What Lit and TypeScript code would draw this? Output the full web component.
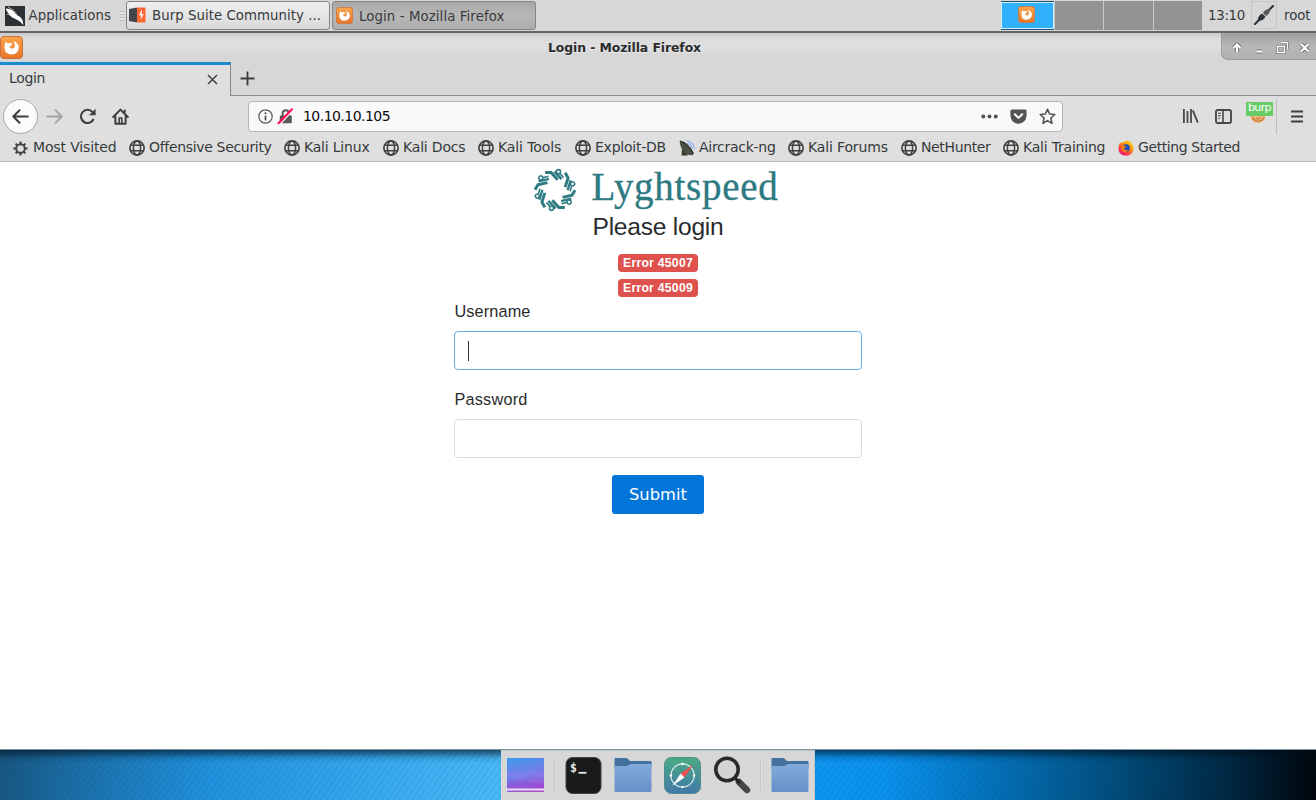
import { LitElement, html, css, svg } from "lit";
import { customElement, property } from "lit/decorators.js";

/* Text run whose tracking is adjusted so that it spans a given width. */
@customElement("fit-text")
class FitText extends LitElement {
  @property({ type: Number }) w = 0;
  static styles = css`
    :host { display: inline-block; white-space: pre; }
    span { display: inline-block; }
  `;
  render() {
    return html`<span><slot></slot></span>`;
  }
  firstUpdated() {
    const span = this.renderRoot.querySelector("span") as HTMLElement;
    const n = (this.textContent || "").length;
    const natural = span.getBoundingClientRect().width;
    if (n > 1 && this.w) {
      span.style.letterSpacing = `${(this.w - natural) / n}px`;
    }
  }
}

const globe = html`<svg width="16" height="16" viewBox="0 0 16 16" fill="none" stroke="#3f423f" stroke-width="1.5">
  <circle cx="8" cy="8" r="7.1" stroke-width="1.7" />
  <ellipse cx="8" cy="8" rx="3.6" ry="7" />
  <path d="M1.7 5.3H14.3M1.7 10.7H14.3" />
</svg>`;

const gear = html`<svg width="15" height="16" viewBox="0 0 15 16" fill="none" stroke="#3f423f">
  <circle cx="7.5" cy="8.5" r="4.3" stroke-width="1.9" />
  <path stroke-width="2" d="M7.5 4V1.4M7.5 13V15.6M3 8.5H.4M12 8.5H14.6M4.3 5.3 2.6 3.6M10.7 5.3l1.7-1.7M4.3 11.7l-1.7 1.7M10.7 11.7l1.7 1.7" />
</svg>`;

const dish = html`<svg width="16" height="16" viewBox="0 0 16 16">
  <path d="M8 .8Q15 2 15.4 9M8 3.3Q12.6 4.4 13.3 9" fill="none" stroke="#8fb6ee" stroke-width="1.3" />
  <path d="M3 9 2.5 15.6H9L7 11z" fill="#3b382c" />
  <path d="M.6 .5Q10 2 15 13.4 13 17 7.5 13.8 1 9.5 .6 .5z" fill="#4c5146" />
  <path d="M1.2 1.2Q9 4 14.4 13.5" fill="none" stroke="#25272a" stroke-width="1" />
</svg>`;

const firefoxBall = html`<svg width="16" height="16" viewBox="0 0 16 16">
  <defs><linearGradient id="fx" x1=".9" y1="0" x2=".2" y2="1">
    <stop offset="0" stop-color="#ffe226" /><stop offset=".4" stop-color="#ff980e" /><stop offset=".75" stop-color="#ff3648" /><stop offset="1" stop-color="#e31587" />
  </linearGradient></defs>
  <path d="M2 2.4 3.3 3.3Q5 1.4 7.4 1.6L9 .3Q15.6 2.5 15.6 8.5 15 15.5 8 15.7 1 15.4.4 9 .4 5 2 2.4z" fill="url(#fx)" />
  <circle cx="8.2" cy="8" r="3.7" fill="#1b4fb0" />
  <path d="M3.4 5.2 8 6.2 6.8 8.3 5.6 8.5Q7 11 10.4 9.8 9 12.8 5.8 12 2.4 10.2 3.4 5.2z" fill="#ff7a18" />
</svg>`;

const orangeFox = (s: number) => html`<svg width=${s} height=${s} viewBox="0 0 22 22">
  <defs><linearGradient id="of" x1="0" y1="0" x2="0" y2="1"><stop offset="0" stop-color="#fba64c" /><stop offset="1" stop-color="#ea7428" /></linearGradient></defs>
  <rect x=".5" y=".5" width="21" height="21" rx="3.6" fill="url(#of)" stroke="#c9713a" />
  <path d="M5.4 5.2 7.2 7.2Q9 6.2 11.2 6.9L12 8.6 9.8 9.4Q9 10 9.5 11 11 12.8 13 11.8 14.600 10.600 14.200 8.500L12.800 4.800Q18 7 18 11.3 17.3 17.4 11.2 17.8 4.6 17.3 4.3 11.5 4.2 8 5.4 5.2z" fill="#fff" />
</svg>`;

const folder = (id: string) => html`<svg width="38" height="36" viewBox="0 0 38 36">
  <defs><linearGradient id=${id} x1="0" y1="0" x2="0" y2="1"><stop offset="0" stop-color="#83acdd" /><stop offset="1" stop-color="#668fc7" /></linearGradient></defs>
  <path d="M.5 2Q.5 1 1.5 1H12Q13.5 1 14.5 2.5L16 4H36.5Q37.5 4 37.5 5V12H.5z" fill="#44719d" />
  <path d="M.5 9H12Q14 9 15 8T18 7H37.5V33.5Q37.5 35 36 35H2Q.5 35 .5 33.5z" fill=${`url(#${id})`} />
</svg>`;

/* One arm of the circuit wheel, repeated six times around the centre. */
const arm = svg`
  <path d="M-9.6-17H-3.9L2.6-10" stroke-width="2.900" />
  <path d="M-.6-18 6.4-10.600" stroke-width="2.300" />
  <path d="M5-15.800 8.400-12.200" stroke-width="1.600" />
  <circle cx="3.4" cy="-17.9" r="2" stroke-width="1.5" fill="#fff" />
`;

const bookmarks: [string, number, unknown][] = [
  ["Most Visited", 83.5, gear],
  ["Offensive Security", 122.3, globe],
  ["Kali Linux", 65.5, globe],
  ["Kali Docs", 62.5, globe],
  ["Kali Tools", 63.3, globe],
  ["Exploit-DB", 71, globe],
  ["Aircrack-ng", 76.5, dish],
  ["Kali Forums", 79.8, globe],
  ["NetHunter", 69.5, globe],
  ["Kali Training", 82.3, globe],
  ["Getting Started", 102, firefoxBall],
];

@customElement("app-root")
class AppRoot extends LitElement {
  static styles = css`
    * { box-sizing: border-box; }
    :host {
      display: flex; flex-direction: column; width: 1316px; height: 800px; overflow: hidden;
      font-family: "DejaVu Sans", sans-serif; color: #363a3b; background: #fff;
    }
    svg { display: block; flex: none; }

    .panel { height: 33px; flex: none; display: flex; align-items: flex-start; background: #d7d7d7; border-bottom: 2px solid #656565; font-size: 13.3px; }
    .apps { width: 126px; height: 31px; display: flex; align-items: center; padding-left: 5px; gap: 3.5px; }
    .grip { width: 4px; height: 10px; margin-left: 5px; background: repeating-linear-gradient(#bdbdbd 0 1px, #e2e2e2 1px 3px); }
    .task { width: 204px; height: 29px; margin: 1px 2px 0 0; border: 1px solid #858585; border-radius: 3px; display: flex; align-items: center; padding: 0 0 1px 2px; gap: 6px; background: linear-gradient(#f1f0f1, #e4e3e4 55%, #d9d9d9); }
    .task.on { background: linear-gradient(#a8a8a8, #b8b7b8 50%, #adadad); gap: 6px; padding-left: 3px; }
    .task.on fit-text { margin-top: 2px; }
    .spacer { flex: 1; }
    .pager { display: flex; gap: 1px; height: 29px; margin-top: 1px; background: #c9c9c9; width: 201px; }
    .desk { flex: 1; background: #929492; }
    .desk.cur { background: #31b1fb; border: 1px solid #d5efff; box-shadow: 0 -1px #195378, 0 1px #195378; height: 27px; margin-top: 1px; display: flex; justify-content: center; align-items: center; padding: 0 2px 2px 0; }
    .clock { width: 49px; height: 30px; display: flex; align-items: center; padding-left: 6px; }
    .plug { width: 26px; height: 28px; margin-top: 1px; border: 1px solid #c6c6c6; display: grid; place-items: center; }
    .user { width: 39px; height: 30px; display: flex; align-items: center; padding-left: 7px; }

    .title { height: 29px; flex: none; display: flex; align-items: flex-start; background: linear-gradient(#c9c9c9, #dddcdd 6px, #dfdee0 15px, #d7d7d7 21px); }
    .title .ico { width: 24px; padding-top: 3px; }
    .title .name { flex: 1; display: flex; justify-content: center; height: 29px; align-items: center; font-weight: 700; font-size: 12.4px; color: #2b2c2c; padding-left: 4px; text-shadow: 0 1px #ececec; }
    .winbtns { width: 95px; height: 27px; display: flex; align-items: center; justify-content: space-between; border: 1px solid #9c9c9c; border-width: 0 0 1px 1px; border-radius: 0 0 0 7px; background: linear-gradient(#9f9f9f, #b9b8b9 14px, #b0b0b0); padding: 3px 3px 0 7px; }

    .tabs { height: 34px; flex: none; display: flex; background: #d7d7d7; box-shadow: inset 0 -1px #8d8e8c; }
    .tab { width: 231px; height: 34px; background: #dfdfdf; border-top: 3px solid #198ccf; border-right: 1px solid #858783; display: flex; align-items: center; justify-content: space-between; padding: 0 12px 5px 9px; font-size: 14px; }
    .tab svg { margin-top: 2px; }
    .plus { width: 33px; display: grid; place-items: center; padding-bottom: 2px; }

    .nav { height: 39px; flex: none; display: flex; align-items: center; background: #dfdfdf; padding: 1px 0 0 3px; }
    .back { width: 35px; height: 35px; border-radius: 50%; border: 1px solid #a7a8a6; background: #fbfafc; display: grid; place-items: center; }
    .nav .fwd { margin-left: 8px; }
    .nav .rel { margin-left: 16px; }
    .nav .home { margin-left: 16px; }
    .url { width: 815px; height: 31px; margin-left: 119px; background: #f9f9f9; border: 1px solid #b4b3b4; border-radius: 4px; display: flex; align-items: center; padding: 0 6px 0 9px; font-size: 14px; color: #0c0c0d; }
    .url .lock { margin-left: 4px; }
    .url .addr { margin-left: 9px; flex: 1; }
    .url .poc { margin: 0 12px 0 12px; }
    .lib { margin-left: 119px; }
    .side { margin-left: 16px; }
    .ext { position: relative; width: 30px; height: 38px; margin-left: 14px; padding: 11px 0 0 4px; }
    .burp { position: absolute; left: 0; top: 5px; width: 27px; height: 14px; background: #66cc66; color: #fff; font-size: 11.2px; line-height: 12px; text-align: center; }
    .menu { height: 35px; border-left: 1px solid #bdbdbd; padding: 10px 0 0 14px; }

    .marks { height: 27px; flex: none; display: grid; grid-template-columns: 116px 155px 99px 95px 97px 104px 109px 113px 102px 115px 140px; align-items: center; padding: 0 0 3px 13px; background: #dfdfdf; border-bottom: 1px solid #bcbbbc; font-size: 14px; }
    .mark { display: flex; align-items: center; gap: 4px; }
    .mark:first-child { gap: 5px; }
    .mark svg { margin-top: 2px; }

    .page { flex: 1; background: #fff; display: flex; flex-direction: column; align-items: center; font-family: "Liberation Sans", sans-serif; color: #292b2c; }
    .brand { display: flex; align-items: center; height: 50px; margin-top: 3px; gap: 15px; padding-right: 5px; color: #2d7a83; font-family: "Liberation Serif", serif; font-size: 39px; line-height: 46px; }
    .brand fit-text { margin-top: -6px; -webkit-text-stroke: .35px #2d7a83; }
    .brand svg { margin-top: -1px; }
    h1 { font-size: 24.6px; font-weight: 400; line-height: 30px; margin: -3px 0 12px; }
    .badge { background: #de514c; color: #fff; font-weight: 700; font-size: 12.2px; border-radius: 4px; width: 80px; height: 18px; line-height: 18px; text-align: center; margin-bottom: 7px; }
    form { width: 408px; margin-top: -5px; display: flex; flex-direction: column; font-size: 16.3px; }
    label { line-height: 24px; margin: 0 0 8px .5px; }
    .field { height: 39px; border: 1px solid #dadbdc; border-radius: 4px; background: #fff; margin-bottom: 17px; padding: 9px 13px; }
    .field.focus { border-color: #66afe9; }
    .caret { width: 1px; height: 20px; background: #333; }
    .submit { align-self: center; width: 92px; height: 39px; border: 0; padding: 0; border-radius: 3px; background: #0275d8; color: #fff; font: 16.3px "DejaVu Sans", sans-serif; }

    .desktop { height: 51px; flex: none; display: flex; justify-content: center; border-top: 1px solid #7a95a5;
      background:
        linear-gradient(rgba(0,10,20,.62), rgba(0,10,20,.12) 8px, transparent 13px),
        repeating-linear-gradient(125deg, rgba(0,30,60,.06) 0 2px, transparent 2px 5px),
        linear-gradient(97deg, #175680 0, #1a6ca3 70px, #2092de 215px, #33a5ec 350px, #48b8f6 500px, #0d96f0 815px, #0a92ee 880px, #0474be 980px, #025081 1100px, #002c49 1210px, #00060b 1310px); }
    .dock { width: 314px; height: 50px; background: #d7d7d7; border: 1px solid #c4c4c4; border-width: 1px 1px 0 0; display: flex; align-items: center; padding: 0 0 1px 5px; }
    .dock .sep { width: 1px; height: 32px; background: #c8c8c8; box-shadow: 1px 0 #e1e1e1; margin: 0 10px 0 9px; }
    .dock .f1 { margin-left: 12px; }
    .dock .nv { margin-left: 12px; }
    .dock .mg { margin-left: 12px; }
  `;

  render() {
    return html`
      <div class="panel">
        <div class="apps">
          <svg width="20" height="20" viewBox="0 0 20 20"><rect width="20" height="20" fill="#2b3134" /><path d="M1 2.5Q8 3 11 8.5 15 10 17.5 14L18.5 19Q14 14 9.500 12.500 5 11 1 3.500z" fill="#fff" /><path d="M3 1Q9 3 12 9M2 8Q7 9 9 12" stroke="#fff" stroke-width=".6" fill="none" /></svg>
          <fit-text w="82.5">Applications</fit-text>
          <span class="grip"></span>
        </div>
        <div class="task">
          <svg width="17" height="16" viewBox="0 0 17 16"><path d="M0 2 8 .5V15.5L0 14z" fill="#45484b" /><path d="M8 .5H15.5Q16.5.5 16.5 1.5V14.5Q16.5 15.5 15.5 15.5H8z" fill="#ff6633" /><path d="M13 2 10 8.3H12.2L11.4 13 14.7 7H12.6z" fill="#fff" /></svg>
          <fit-text w="169">Burp Suite Community ...</fit-text>
        </div>
        <div class="task on">${orangeFox(17)}<fit-text w="145.5">Login - Mozilla Firefox</fit-text></div>
        <span class="spacer"></span>
        <div class="pager"><div class="desk cur">${orangeFox(17)}</div><div class="desk"></div><div class="desk"></div><div class="desk"></div></div>
        <div class="clock"><fit-text w="37">13:10</fit-text></div>
        <div class="plug"><svg width="20" height="20" viewBox="0 0 20 20"><path d="M.8 19.2 6 14M14 6 19.2.8" stroke="#30353a" stroke-width="2.2" stroke-linecap="round" /><path d="M3.6 16Q3.600 10.500 8.200 8.500L11.500 11.800Q9.500 16 3.600 16z" fill="#30353a" /><path d="M9 8Q11 3.800 16 4 16.200 9 12 11z" fill="#585c5d" /></svg></div>
        <div class="user"><fit-text w="26.5">root</fit-text></div>
      </div>

      <div class="title">
        <div class="ico">${orangeFox(23)}</div>
        <div class="name"><fit-text w="153">Login - Mozilla Firefox</fit-text></div>
        <div class="winbtns">
          <svg width="85" height="16" viewBox="0 0 85 16" fill="none">
            <g stroke="#787878" stroke-width="4" stroke-linejoin="round"><path d="M8 12.500V5M4.500 8 8 4.500 11.500 8M27.500 11.500H33.500M72 4 79.500 11.500M79.500 4 72 11.500" /><path d="M48.500 6.500H55.500V12.500H48.500zM52 2.500H58.500V9" stroke-width="3" /></g>
            <g stroke="#fff" stroke-width="2"><path d="M8 12.500V5M4.500 8 8 4.500 11.500 8M27.500 11.500H33.500M72 4 79.500 11.500M79.500 4 72 11.500" /><path d="M48.500 6.500H55.500V12.500H48.500zM52 2.500H58.500V9" stroke-width="1.3" /></g>
          </svg>
        </div>
      </div>

      <div class="tabs">
        <div class="tab"><fit-text w="36">Login</fit-text><svg width="11" height="11" viewBox="0 0 11 11"><path d="M1 1 10 10M10 1 1 10" stroke="#3f4240" stroke-width="1.5" /></svg></div>
        <div class="plus"><svg width="15" height="15" viewBox="0 0 15 15"><path d="M7.500.5V14.500M.5 7.500H14.500" stroke="#3a3d3b" stroke-width="1.8" /></svg></div>
      </div>

      <div class="nav">
        <div class="back"><svg width="17" height="15" viewBox="0 0 17 15" fill="none" stroke="#3d403e" stroke-width="2" stroke-linecap="round" stroke-linejoin="round"><path d="M7.500 1.200 1.300 7.500 7.500 13.800M1.500 7.500H15.800" /></svg></div>
        <svg class="fwd" width="17" height="15" viewBox="0 0 17 15" fill="none" stroke="#a2a3a2" stroke-width="1.9" stroke-linecap="round" stroke-linejoin="round"><path d="M9.500 1.200 15.700 7.500 9.500 13.800M15.500 7.500H1.200" /></svg>
        <svg class="rel" width="17" height="17" viewBox="0 0 17 17" fill="none"><path d="M13.600 4.200A6.600 6.600 0 1 0 14.600 11" stroke="#3d403e" stroke-width="2.1" /><path d="M16.600.8V7.200H10z" fill="#3d403e" /></svg>
        <svg class="home" width="17" height="17" viewBox="0 0 17 17" fill="none" stroke="#3d403e" stroke-width="2" stroke-linejoin="round" stroke-linecap="round"><path d="M1.200 9 8.500 1.600 15.800 9M3.400 8.600V15.800H13.600V8.600M12.800 2.400V4" /><path d="M7.200 15.500V10H9.800V15.500" stroke-width="1.6" /></svg>
        <div class="url">
          <svg width="15" height="15" viewBox="0 0 15 15"><circle cx="7.5" cy="7.5" r="6.7" fill="none" stroke="#59595a" stroke-width="1.2" /><path d="M7.500 6.600V11.400" stroke="#59595a" stroke-width="1.8" /><circle cx="7.5" cy="4.3" r="1.1" fill="#59595a" /></svg>
          <svg class="lock" width="17" height="17" viewBox="0 0 17 17"><path d="M5.600 8V5.200Q5.800 2.200 8.800 2.200T12 5.200V8" fill="none" stroke="#59595a" stroke-width="2" /><rect x="2.8" y="7.5" width="12" height="7.8" rx="1.2" fill="#59595a" /><path d="M3 16 16 2.200" stroke="#f9f9f9" stroke-width="1.6" /><path d="M1.500 15.200 15 1.200" stroke="#ff0b4e" stroke-width="2" stroke-linecap="round" /></svg>
          <span class="addr"><fit-text w="87">10.10.10.105</fit-text></span>
          <svg width="17" height="5" viewBox="0 0 17 5" fill="#515355"><circle cx="2.3" cy="2.5" r="2" /><circle cx="8.5" cy="2.5" r="2" /><circle cx="14.7" cy="2.5" r="2" /></svg>
          <svg class="poc" width="17" height="15" viewBox="0 0 17 15"><path d="M1.800.5H15.200Q16.600.5 16.600 2V6.500Q16 14.300 8.500 14.800 1 14.300.4 6.500V2Q.4.5 1.800.5z" fill="#515355" /><path d="M4.800 5.300 8.500 8.900 12.200 5.300" fill="none" stroke="#fff" stroke-width="2" stroke-linecap="round" stroke-linejoin="round" /></svg>
          <svg width="17" height="17" viewBox="0 0 17 17"><path d="M8.500 1.300 10.600 6 15.800 6.500 11.900 10 13 15.300 8.500 12.600 4 15.300 5.100 10 1.200 6.500 6.400 6z" fill="none" stroke="#515355" stroke-width="1.6" stroke-linejoin="round" /></svg>
        </div>
        <svg class="lib" width="17" height="16" viewBox="0 0 17 16" fill="none" stroke="#464947" stroke-width="1.8"><path d="M1.900 1V15M5.500 3V15M9 1V15M10.800 2.400 15.800 14.600" /></svg>
        <svg class="side" width="17" height="15" viewBox="0 0 17 15" fill="none" stroke="#464947"><rect x="1" y="1" width="15" height="13" rx="1.8" stroke-width="1.9" /><path d="M8 1V14" stroke-width="1.6" /><path d="M3 4.200H6M3 6.700H6M3 9.200H5" stroke-width="1.1" /></svg>
        <div class="ext">
          <svg width="17" height="16" viewBox="0 0 17 16"><ellipse cx="8" cy="8.2" rx="7.5" ry="6.7" fill="#edb878" /><path d="M2.500 9Q4 13 8 13.200T14 9.500M6 10Q8 12 10.500 9.500" fill="none" stroke="#c8793a" stroke-width="1.2" /></svg>
          <span class="burp"><fit-text w="23">burp</fit-text></span>
        </div>
        <div class="menu"><svg width="12" height="15" viewBox="0 0 12 15"><path d="M0 2.500H12M0 7.500H12M0 12.500H12" stroke="#3d403e" stroke-width="1.9" /></svg></div>
      </div>

      <div class="marks">
        ${bookmarks.map(([t, w, icon]) => html`<div class="mark">${icon}<fit-text w=${w}>${t}</fit-text></div>`)}
      </div>

      <div class="page">
        <div class="brand">
          <svg width="44" height="44" viewBox="-21.5 -21.5 43 43" fill="none" stroke="#2d7a83">
            ${[0, 60, 120, 180, 240, 300].map((a) => svg`<g transform="rotate(${a})">${arm}</g>`)}
          </svg>
          <fit-text w="187">Lyghtspeed</fit-text>
        </div>
        <h1><fit-text w="131">Please login</fit-text></h1>
        <div class="badge"><fit-text w="70">Error 45007</fit-text></div>
        <div class="badge"><fit-text w="70">Error 45009</fit-text></div>
        <form>
          <label><fit-text w="76">Username</fit-text></label>
          <div class="field focus"><div class="caret"></div></div>
          <label><fit-text w="73">Password</fit-text></label>
          <div class="field"></div>
          <button class="submit" type="button"><fit-text w="58">Submit</fit-text></button>
        </form>
      </div>

      <div class="desktop">
        <div class="dock">
          <svg width="39" height="36" viewBox="0 0 39 36"><defs><linearGradient id="dk" x1=".3" y1="0" x2=".6" y2="1"><stop offset="0" stop-color="#4696ec" /><stop offset=".5" stop-color="#747ce8" /><stop offset="1" stop-color="#aa4ed0" /></linearGradient></defs><rect x="1" y="1" width="37" height="34" fill="url(#dk)" /><path d="M1 14Q10 12 18 16 27 9 38 15V22Q25 16 14 23L1 19z" fill="#8c85ee" opacity=".4" /><path d="M1 25Q15 22 38 28V31H1z" fill="#8937cf" opacity=".25" /><rect x="1" y="31.500" width="37" height="2" fill="#eadcf5" /></svg>
          <span class="sep"></span>
          <svg width="37" height="37" viewBox="0 0 36 37"><rect x=".5" y=".5" width="35" height="36" rx="6.5" fill="#191b1a" stroke="#404241" /><text x="4.5" y="14.500" font-family="DejaVu Sans Mono, monospace" font-weight="700" font-size="11.500" fill="#e9e9e9">$</text><path d="M13 15.800H21" stroke="#e9e9e9" stroke-width="1.800" /></svg>
          <span class="f1">${folder("fa")}</span>
          <svg class="nv" width="37" height="37" viewBox="0 0 37 37"><defs><linearGradient id="sf" x1="0" y1="0" x2="0" y2="1"><stop offset="0" stop-color="#4bab84" /><stop offset="1" stop-color="#4178a8" /></linearGradient></defs><rect x=".5" y=".5" width="36" height="36" rx="7" fill="url(#sf)" stroke="#4d8c8b" /><circle cx="18.5" cy="18.5" r="11.6" fill="none" stroke="#e6f3ef" stroke-width="1.1" /><g fill="#fff"><circle cx="18.5" cy="6.900" r="1.2" /><circle cx="18.5" cy="30.100" r="1.2" /><circle cx="6.900" cy="18.5" r="1.2" /><circle cx="30.100" cy="18.5" r="1.2" /></g><path d="M29.500 7.500 20.400 20.400 16.600 16.600z" fill="#f0524f" /><path d="M8.500 28.800 16.600 16.600 20.400 20.400z" fill="#fff" /></svg>
          <svg class="mg" width="38" height="38" viewBox="0 0 38 38"><path d="M26 26 34 34" stroke="#454746" stroke-width="6.500" stroke-linecap="round" /><path d="M21 21 27 27" stroke="#222" stroke-width="3" /><circle cx="14" cy="13.500" r="11.200" fill="#d3d5d5" stroke="#292b2b" stroke-width="3.600" /></svg>
          <span class="sep"></span>
          ${folder("fb")}
        </div>
      </div>
    `;
  }
}
